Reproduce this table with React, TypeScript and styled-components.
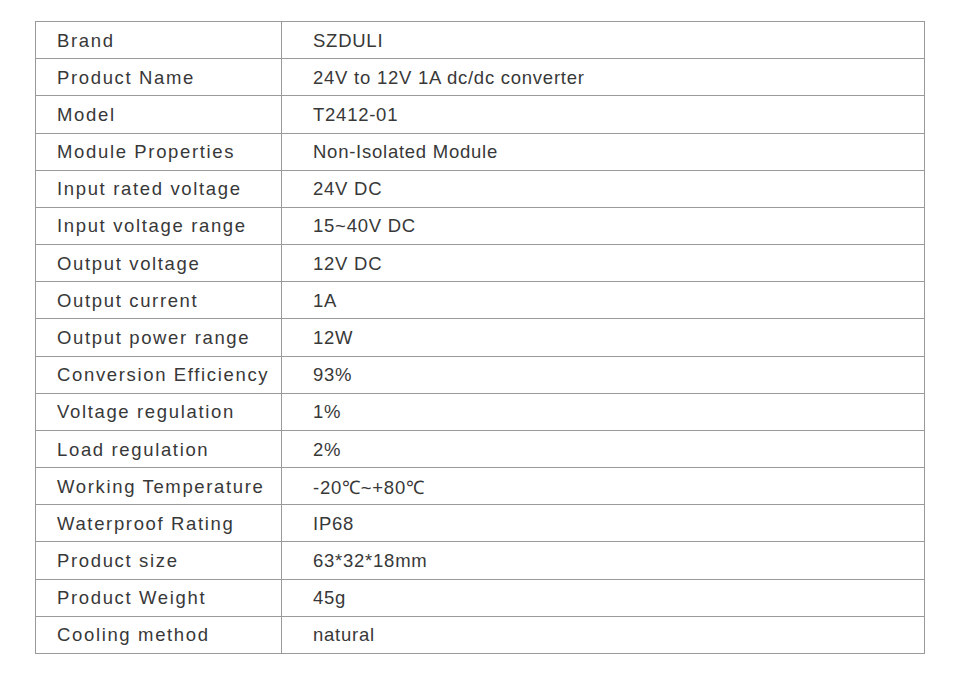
import styled, { createGlobalStyle } from "styled-components";
import { Fragment } from "react";

const Global = createGlobalStyle`
  html, body {
    margin: 0;
    background: #ffffff;
  }
`;

const Page = styled.div`
  width: 960px;
  height: 680px;
  padding: 21px 0 0 35px;
  box-sizing: border-box;
  background: #fff;
`;

const Sheet = styled.div`
  display: grid;
  grid-template-columns: 246px 1fr;
  grid-template-rows: repeat(17, 1fr);
  width: 890px;
  height: 633px;
  box-sizing: border-box;
  border-top: 1px solid #9a9a9a;
  border-left: 1px solid #9a9a9a;
  font-family: "Liberation Sans", Arial, sans-serif;
  color: #383838;
`;

const Cell = styled.div<{ $label?: boolean }>`
  display: flex;
  align-items: center;
  box-sizing: border-box;
  border-right: 1px solid #9a9a9a;
  border-bottom: 1px solid #9a9a9a;
  padding-left: ${(p) => (p.$label ? "21px" : "31px")};
  font-size: 18.5px;
  letter-spacing: ${(p) => (p.$label ? "1.65px" : "0.75px")};
  padding-top: 1px;
`;

const rows: [string, string][] = [
  ["Brand", "SZDULI"],
  ["Product Name", "24V to 12V 1A dc/dc converter"],
  ["Model", "T2412-01"],
  ["Module Properties", "Non-Isolated Module"],
  ["Input rated voltage", "24V DC"],
  ["Input voltage range", "15~40V DC"],
  ["Output voltage", "12V DC"],
  ["Output current", "1A"],
  ["Output power range", "12W"],
  ["Conversion Efficiency", "93%"],
  ["Voltage regulation", "1%"],
  ["Load regulation", "2%"],
  ["Working Temperature", "-20℃~+80℃"],
  ["Waterproof Rating", "IP68"],
  ["Product size", "63*32*18mm"],
  ["Product Weight", "45g"],
  ["Cooling method", "natural"],
];

function App() {
  return (
    <Page>
      <Global />
      <Sheet>
        {rows.map(([k, v]) => (
          <Fragment key={k}>
            <Cell $label>{k}</Cell>
            <Cell>{v}</Cell>
          </Fragment>
        ))}
      </Sheet>
    </Page>
  );
}

export default App;
